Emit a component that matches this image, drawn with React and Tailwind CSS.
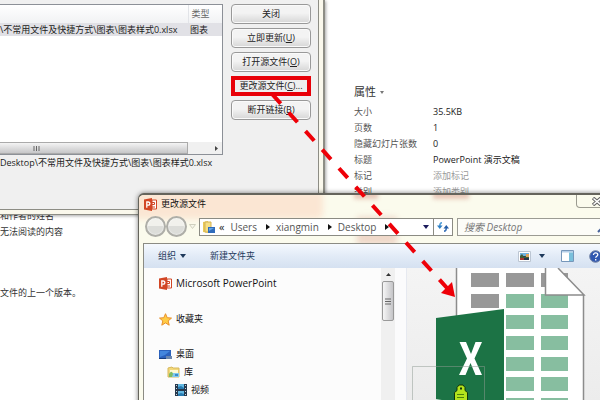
import { useState } from "react";

const linkButtons = [
  { text: "关闭" },
  { text: "立即更新", hotkey: "U" },
  { text: "打开源文件", hotkey: "O" },
  { text: "更改源文件", hotkey: "C", marked: true },
  { text: "断开链接", hotkey: "B" },
];

const properties = [
  ["大小", "35.5KB"],
  ["页数", "1"],
  ["隐藏幻灯片张数", "0"],
  ["标题", "PowerPoint 演示文稿"],
  ["标记", "添加标记", true],
  ["类别", "添加类别", true],
];

const crumbs = ["Users", "xiangmin", "Desktop"];

function App() {
  return (
    <div className="relative h-screen w-full overflow-hidden bg-white font-['Open_Sans','Noto_Sans_CJK_SC',sans-serif] text-[9px] leading-4 text-[#333]">
      <Backstage />
      <LinksWindow />
      <FileWindow />
      <Arrow />
    </div>
  );
}

// the info page behind both windows
function Backstage() {
  return (
    <main className="grid grid-cols-[354px_1fr] whitespace-nowrap">
      <div className="pt-[208px]">
        <p>和作者的姓名</p>
        <p>无法阅读的内容</p>
        <p className="pt-[45px]">文件的上一个版本。</p>
      </div>
      <div className="pt-[84px]">
        <h2 className="flex items-center gap-1 pb-1 text-[11px]">
          属性
          <svg width="4" height="3" viewBox="0 0 4 3">
            <path d="M0 0h4L2 3z" fill="#777" />
          </svg>
        </h2>
        <dl className="grid grid-cols-[79px_1fr]">
          {properties.map(([name, value, empty]) => (
            <div key={name} className="col-span-2 grid grid-cols-subgrid">
              <dt className="text-[#555]">{name}</dt>
              <dd className={empty ? "text-[#999]" : "text-[#222]"}>{value}</dd>
            </div>
          ))}
        </dl>
      </div>
    </main>
  );
}

function LinksWindow() {
  return (
    <section className="absolute top-0 left-0 h-[215px] w-[325px] overflow-hidden border-r-2 border-b border-[#8d8d85] bg-[#faf8ec] pr-1 pb-1 shadow-[1px_1px_3px_rgba(0,0,0,0.35)]">
      <div className="flex h-full gap-2 border-r border-b border-[#8d8d85] bg-[#f0f0f0] pt-1 text-[#222]">
        <div className="w-[223px] overflow-hidden whitespace-nowrap">
          <div className="flex h-[151px] flex-col border-y border-r border-[#8c9097] bg-white">
            <table className="w-full table-fixed border-collapse text-left">
              <thead>
                <tr className="h-[18px] bg-linear-to-b from-white to-[#f1f2f4] text-[#666]">
                  <th className="w-[188px] border-r border-[#e2e4e8]"></th>
                  <th className="pl-[3px] font-normal">类型</th>
                </tr>
              </thead>
              <tbody>
                <tr className="h-[13px] bg-[#e1e1e6] leading-3">
                  <td>\不常用文件及快捷方式\图表\图表样式0.xlsx</td>
                  <td className="pl-[2px]">图表</td>
                </tr>
              </tbody>
            </table>
            <div className="mt-auto flex h-3 items-center justify-between bg-[#f0f0f0] pr-1">
              <div className="flex h-full w-[188px] items-center border border-l-0 border-[#aaa] bg-linear-to-b from-[#f4f4f4] to-[#c6c6c8] pl-[33px]">
                <svg width="7" height="5" viewBox="0 0 7 5">
                  <path d="M1 0v5M3.500 0v5M6 0v5" stroke="#666" />
                </svg>
              </div>
              <svg width="3" height="5" viewBox="0 0 3 5">
                <path d="M0 0l3 2.500L0 5z" fill="#444" />
              </svg>
            </div>
          </div>
          <p>Desktop\不常用文件及快捷方式\图表\图表样式0.xlsx</p>
        </div>
        <div className="flex w-20 flex-col gap-1">
          {linkButtons.map(({ text, hotkey, marked }) => (
            <button
              key={text}
              type="button"
              className={
                marked
                  ? "h-5 border-4 border-[#e80008] bg-[#eee] text-[9px] leading-3 whitespace-nowrap"
                  : "h-5 rounded-sm border border-[#999] bg-linear-to-b from-[#f3f3f3] from-45% to-[#d6d6d6] text-[9px] leading-4 whitespace-nowrap shadow-[inset_0_0_0_1px_#fafafa]"
              }
            >
              {text}
              {hotkey && (
                <>
                  (<u>{hotkey}</u>)
                </>
              )}
              {marked && "..."}
            </button>
          ))}
        </div>
      </div>
    </section>
  );
}

function FileWindow() {
  const [search, setSearch] = useState("");

  return (
    <section className="absolute top-[193px] -right-5 -bottom-5 left-[138px] flex flex-col overflow-hidden rounded-tl-md border border-t-2 border-[#65645c] bg-[#fbfbed] pl-1 shadow-[0_0_5px_rgba(0,0,0,0.5)]">
      {/* glass with the window below showing through */}
      <div className="absolute -top-1 -left-2 h-7 w-[192px] rounded-br-md bg-[#fbe6d3] blur-[3px]"></div>
      <div className="absolute -top-1 left-[215px] h-2 w-6 bg-[#dca596]/60 blur-[2px]"></div>
      <div className="absolute -top-1 left-[294px] h-2 w-9 bg-[#dca596]/60 blur-[2px]"></div>
      <div className="absolute top-[22px] left-[218px] h-7 w-10 bg-[#e3b5a5]/50 blur-[3px]"></div>

      <header className="relative flex h-[21px] items-start justify-between">
        <h1 className="flex items-center gap-1 pt-px pl-px text-[#111]">
          <PptIcon />
          更改源文件
        </h1>
        <button
          type="button"
          aria-label="关闭"
          className="flex h-[13px] w-[43px] items-center rounded-b-sm border border-t-0 border-[#9b9b90] pl-[14px]"
        >
          <svg width="12" height="9" viewBox="0 0 12 9">
            <path d="M2 1l8 7M10 1L2 8" stroke="#666" strokeWidth="3.500" />
            <path d="M2.500 1.500l7 6M9.500 1.500l-7 6" stroke="#fff" strokeWidth="1.500" />
          </svg>
        </button>
      </header>

      <div className="relative flex h-[27px] items-start pl-[2px]">
        <NavButtons />
        <div className="mt-[2px] ml-px flex h-[18px] w-[254px] shrink-0 items-center border border-[#8b8b83] bg-white pl-[3px] text-[10px] text-[#555]">
          <FolderIcon />
          <span className="pl-1 text-[11px] text-[#222]">«</span>
          {crumbs.map((name) => (
            <span key={name} className="flex items-center">
              <a href={"#" + name} className="pl-[6px]">
                {name}
              </a>
              <svg className="ml-[9px]" width="4" height="6" viewBox="0 0 4 6">
                <path d="M0 0l4 3-4 3z" fill="#111" />
              </svg>
            </span>
          ))}
          <svg className="mr-1 ml-auto" width="6" height="4" viewBox="0 0 6 4">
            <path d="M0 0h6L3 4z" fill="#1b1b5c" />
          </svg>
          <button
            type="button"
            aria-label="刷新"
            className="flex h-full w-[19px] items-center justify-center border-l border-[#8b8b83]"
          >
            <svg width="12" height="10" viewBox="0 0 12 10" fill="none">
              <path d="M5 .8C3 .8 2.800 2 2.800 4" stroke="#4f9bd6" strokeWidth="1.500" />
              <path d="M0 3.500h5.600L2.800 7z" fill="#2d7fc4" />
              <path d="M7 9.200c2 0 2.300-1.200 2.300-3.200" stroke="#3a72b8" strokeWidth="1.500" />
              <path d="M6.500 6.500L9.300 3 12 6.500z" fill="#245ca5" />
            </svg>
          </button>
        </div>
        <label className="mt-[2px] mr-2 ml-1 flex h-[18px] flex-1 items-center border border-[#9b9b93] bg-[#fcfcf8] pl-[6px]">
          <span className="hidden">搜索</span>
          <input
            type="text"
            aria-label="搜索"
            value={search}
            onChange={(e) => setSearch(e.target.value)}
            placeholder="搜索 Desktop"
            className="h-4 w-32 bg-transparent text-[10px] leading-4 italic outline-none placeholder:text-[#777]"
          />
          <svg className="ml-[5px] shrink-0" width="12" height="12" viewBox="0 0 12 12" fill="none">
            <circle cx="7.500" cy="4.500" r="3.500" stroke="#48639b" />
            <path d="M5 7l-4 4" stroke="#48639b" strokeWidth="2" />
          </svg>
        </label>
      </div>

      <div className="relative flex min-h-0 flex-1 flex-col border-t border-l border-[#8b8b83] bg-white">
        <div className="flex h-6 shrink-0 items-center bg-linear-to-b from-[#f5f9fe] via-[#e2ebf7] to-[#d5e1f1] pr-[17px] pl-[14px] text-[#1e395b]">
          <button type="button" className="flex items-center gap-1">
            组织 <Caret />
          </button>
          <button type="button" className="ml-6">
            新建文件夹
          </button>
          <button type="button" aria-label="视图" className="ml-auto flex items-center gap-2">
            <svg width="13" height="11" viewBox="0 0 13 11">
              <path d="M.5.5h12v10H.5z" fill="#fff" stroke="#bcc6d3" />
              <path d="M2 2h9v3H2z" fill="#70b2df" />
              <path d="M2 5h9v4H2z" fill="#25344a" />
              <path d="M2 5l2-2 2 3 3-2 2 2v1H2z" fill="#405c38" />
              <path d="M8 3h3v3H8z" fill="#dfa45b" />
              <path d="M2 7h4v2H2z" fill="#a63630" />
            </svg>
            <Caret />
          </button>
          <button type="button" aria-label="预览窗格" className="ml-4">
            <svg width="13" height="12" viewBox="0 0 13 12">
              <path d="M.5.500h12v11H.5z" fill="#fff" stroke="#7697ba" />
              <path d="M1 1h11v1.500H1z" fill="#b4cee8" />
              <path d="M8 2.500h4V11H8z" fill="#7ac0dc" />
            </svg>
          </button>
          <button type="button" aria-label="帮助" className="ml-[15px]">
            <svg width="13" height="13" viewBox="0 0 13 13">
              <circle cx="6.500" cy="6.500" r="5.800" fill="#3058b0" stroke="#7383a4" />
              <path
                d="M4.500 5c0-3 4.300-2.500 4.300-.3 0 1.600-2 1.500-2.100 3.100M6.700 9v1.500"
                fill="none"
                stroke="#fff"
                strokeWidth="1.300"
              />
            </svg>
          </button>
        </div>

        <div className="flex min-h-0 flex-1">
          <Tree />
          <div className="flex w-[14px] shrink-0 flex-col items-center bg-[#f0f0f0]">
            <svg className="my-[5px] shrink-0" width="5" height="3" viewBox="0 0 5 3">
              <path d="M0 3h5L2.500 0z" fill="#333" />
            </svg>
            <div className="flex h-10 w-3 shrink-0 items-center justify-center rounded-xs border border-[#999] bg-linear-to-r from-[#f6f6f6] to-[#c5c5c8]">
              <svg width="6" height="7" viewBox="0 0 6 7">
                <path d="M0 1h6M0 3.500h6M0 6h6" stroke="#666" />
              </svg>
            </div>
          </div>
          <div className="w-[12px] shrink-0 border-r border-[#e6e9f0] bg-[#fbfbfc]"></div>
          <div className="min-w-0 flex-1 bg-linear-to-b from-[#f4f4f4] to-[#ebebeb]">
            <ExcelFile />
          </div>
        </div>
      </div>
    </section>
  );
}

function Tree() {
  return (
    <nav className="w-[237px] shrink-0 bg-[#fcfcfc] pt-[6px] pl-[15px] text-[#111]">
      <ul>
        <li className="flex h-[18px] items-center gap-1 text-[10px]">
          <PptIcon />
          Microsoft PowerPoint
        </li>
        <li className="mt-[18px] flex h-[18px] items-center gap-1">
          <svg width="13" height="13" viewBox="0 0 13 13">
            <path
              d="M6.500.7l1.700 4 4.300.4-3.300 2.800 1 4.300-3.700-2.300-3.700 2.300 1-4.300L.5 5.100l4.300-.4z"
              fill="#ffcc45"
              stroke="#e8902c"
            />
          </svg>
          收藏夹
        </li>
        <li className="mt-[17px] flex h-[18px] items-center gap-1">
          <svg width="13" height="11" viewBox="0 0 13 11">
            <path d="M0 1h12v9H0z" fill="#2c62bd" />
            <path d="M1 2h10L6 6 1 8z" fill="#4386dd" />
            <path d="M0 9h12v1H0z" fill="#173d7c" />
            <path d="M7 7h6v3H7z" fill="#6c87ad" />
          </svg>
          桌面
        </li>
        <li className="flex h-[18px] items-center gap-1 pl-2">
          <svg width="13" height="12" viewBox="0 0 13 12">
            <path d="M1 2l4-1 1 1h6v9H1z" fill="#f3d879" stroke="#d7b85c" />
            <path d="M3 4h8v3H3z" fill="#fff9d2" />
            <path d="M3 7h9v4H3z" fill="#83c9ed" />
            <path d="M2 8c2-3 3-3 4 0l-1 3H2z" fill="#82bc62" />
            <path d="M8 8h3v2H8z" fill="#3d8bcb" />
          </svg>
          库
        </li>
        <li className="flex h-[18px] items-center gap-1 pl-4">
          <svg width="12" height="12" viewBox="0 0 12 12">
            <path d="M0 0h12v12H0z" fill="#27384c" />
            <path d="M3 0h6v5H3zM3 7h6v5H3z" fill="#62b8e2" />
            <path d="M3 3l3-1 3 2v1H3zM3 10l3-1 3 1v2H3z" fill="#2679af" />
            <path d="M1.500 1v11M10.500 1v11" stroke="#c9d6df" strokeDasharray="1 2" />
          </svg>
          视频
        </li>
      </ul>
    </nav>
  );
}

function Caret() {
  return (
    <svg width="6" height="4" viewBox="0 0 6 4">
      <path d="M0 0h6L3 4z" fill="#1e395b" />
    </svg>
  );
}

function PptIcon() {
  return (
    <svg width="13" height="13" viewBox="0 0 13 13">
      <path d="M8 2h4.500v9H8z" fill="#fff" stroke="#d24625" />
      <path d="M8 4.500h2.500v2H8M8 9h3" fill="none" stroke="#d24625" />
      <path d="M0 1.500L8 0v13l-8-1.500z" fill="#d24625" />
      <path d="M2.800 9.700V4h1.400c2.200 0 2.200 3.200 0 3.200H2.800" fill="none" stroke="#fff" strokeWidth="1.300" />
    </svg>
  );
}

function FolderIcon() {
  return (
    <svg width="12" height="13" viewBox="0 0 12 13">
      <path d="M0 1l5-1v12l-5-1z" fill="#e9c958" />
      <path d="M2 1h6v10H2z" fill="#f6df84" stroke="#d4b254" />
      <path d="M5 6h7v6H5z" fill="#2f6bbb" />
      <path d="M6 7h5L6 10z" fill="#65a5e3" />
    </svg>
  );
}

function NavButtons() {
  return (
    <div className="flex items-center">
      <button
        type="button"
        aria-label="后退"
        className="size-[21px] rounded-full border-2 border-[#aeaea8] bg-linear-to-b from-[#f1f1ec] from-50% to-[#dcddd9] to-50% shadow-[inset_0_0_2px_#fff]"
      ></button>
      <button
        type="button"
        aria-label="前进"
        className="size-[21px] rounded-full border-2 border-[#aeaea8] bg-linear-to-b from-[#f1f1ec] from-50% to-[#dcddd9] to-50% shadow-[inset_0_0_2px_#fff]"
      ></button>
      <svg className="mx-[2px]" width="7" height="5" viewBox="0 0 7 5">
        <path d="M.5.5h6l-3 4z" fill="#f6f6ea" stroke="#d0d0bf" />
      </svg>
    </div>
  );
}

// big xlsx thumbnail, cut off by the window edges
function ExcelFile() {
  const rows = [5, 26, 47, 68, 89, 109, 130];
  return (
    <svg width="206" height="153" viewBox="0 0 206 153">
      <path d="M49 0h102l26 26v127H49z" fill="#fff" />
      <path d="M49.500 0v153M176.500 26v127" stroke="#8c8c8c" strokeWidth="1.500" />
      {rows.map((y, i) => (
        <g key={y} fill="#87bea0">
          <path d={`M64 ${y}h28v14h-28z`} fill="#989898" />
          <path d={`M99 ${y}h28v14h-28z`} fill={i === 0 ? "#989898" : "#87bea0"} />
          <path d={`M134 ${y}h27v14h-27z`} fill={i === 0 ? "#989898" : "#87bea0"} />
        </g>
      ))}
      <path d="M139 0h12l26 27h-38z" fill="#fff" />
      <path d="M138.500 0v27H177L151 0" fill="none" stroke="#8c8c8c" strokeWidth="1.500" />
      <path d="M29 50l68-9v122l-68-12z" fill="#1c7345" />
      <path d="M52.500 74H59l5 12 4.500-12H75l-7.500 16.500L75 107h-6.500l-5-12-5 12H52l8-16.500z" fill="#fff" />
      <path d="M5.500 153V98.500h72V153" fill="none" stroke="#909b94" strokeOpacity=".5" />
      <path d="M29 131l29 5-29-2z" fill="#d9eee0" />
      <path
        d="M47.500 132.500v-8l2.500-2v-3l2-2.500h4l2 2.500v3l2.500 2v8z"
        fill="#b4e31d"
        stroke="#12340b"
      />
      <path d="M53 119.500h2v2h-2z" fill="#12340b" />
      <path d="M50 126.500h7M50 129.500h7" stroke="#4c830b" />
    </svg>
  );
}

// red pointer drawn over everything
function Arrow() {
  return (
    <svg className="pointer-events-none absolute top-[94px] left-[270px]" width="188" height="206" viewBox="0 0 188 206">
      <path d="M2 0L177 194" stroke="#ee0008" strokeWidth="4" strokeDasharray="13 12" />
      <path d="M185 203l-14-4 11-11z" fill="#ee0008" />
    </svg>
  );
}

export default App;
